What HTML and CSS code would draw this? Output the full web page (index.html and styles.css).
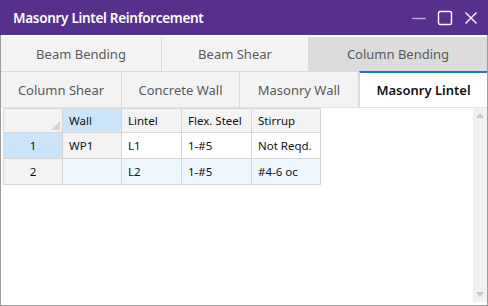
FILE: index.html
```html
<!DOCTYPE html>
<html>
 <head>
  <title>Masonry Lintel Reinforcement</title>
  <link rel="stylesheet" href="styles.css">
 </head>
 <body>
  <div class="window">
   <div class="titlebar">
    <span class="title">Masonry Lintel Reinforcement</span>
    <div class="controls">
     <svg class="ctl min" width="16" height="16" viewBox="0 0 16 16"><path d="M1 8.5h14" stroke="#b9a9d2" stroke-width="1.4" fill="none"/></svg>
     <svg class="ctl max" width="16" height="16" viewBox="0 0 16 16"><rect x="1.5" y="1.5" width="13" height="13" rx="1.5" stroke="#fff" stroke-width="1.4" fill="none"/></svg>
     <svg class="ctl close" width="16" height="16" viewBox="0 0 16 16"><path d="M2.5 2.5l11 11M13.5 2.5l-11 11" stroke="#fff" stroke-width="1.4" fill="none"/></svg>
    </div>
   </div>

   <div class="tabs">
    <div class="tabrow row-top">
     <div class="tab">Beam Bending</div>
     <div class="tab">Beam Shear</div>
     <div class="tab pressed">Column Bending</div>
    </div>
    <div class="tabrow row-bottom">
     <div class="tab">Column Shear</div>
     <div class="tab">Concrete Wall</div>
     <div class="tab">Masonry Wall</div>
     <div class="tab selected">Masonry Lintel</div>
    </div>
   </div>

   <div class="panel">
    <table class="grid">
     <tr class="head">
      <th class="corner"><span class="corner-mark"></span></th>
      <th class="cur">Wall</th>
      <th>Lintel</th>
      <th>Flex. Steel</th>
      <th>Stirrup</th>
     </tr>
     <tr>
      <td class="rowhead cur">1</td>
      <td class="readonly">WP1</td>
      <td>L1</td>
      <td>1-#5</td>
      <td>Not Reqd.</td>
     </tr>
     <tr class="alt">
      <td class="rowhead">2</td>
      <td></td>
      <td>L2</td>
      <td>1-#5</td>
      <td>#4-6 oc</td>
     </tr>
    </table>
    <div class="scrollbar">
     <span class="arrow up"></span>
     <span class="arrow down"></span>
    </div>
   </div>
  </div>
 </body>
</html>
```

FILE: styles.css
```css
body
{
 margin: 0;
 font-family: "Noto Sans", "DejaVu Sans", sans-serif;
}
.window
{
 width: 488px;
 height: 306px;
 box-sizing: border-box;
 border: 1px solid #9c9c9c;
 border-top: none;
 background: #fff;
 display: flex;
 flex-direction: column;
}
.titlebar
{
 height: 35px;
 margin: 0 -1px;
 background: #55308d;
 color: #fff;
 display: flex;
 align-items: center;
 justify-content: space-between;
 padding: 0 9px 0 13px;
}
.title { font-size: 13.5px; font-weight: 600; letter-spacing: -0.3px; }
.controls { display: flex; gap: 10px; align-items: center; }

.tabs { padding-top: 2px; background: #fff; }
.tabrow
{
 display: grid;
 font-size: 13px;
 color: #5a5a5a;
}
.row-top { grid-template-columns: 161px 147px 1fr; height: 34px; border-bottom: 1px solid #dadada; }
.row-bottom { grid-template-columns: 121px 118px 119px 1fr; height: 35px; }
.tab
{
 background: #f3f3f3;
 display: flex;
 align-items: center;
 justify-content: center;
 border-right: 1px solid #dadada;
}
.tab:last-child { border-right: none; }
.tab.pressed { background: #dcdcdc; }
.tab.selected
{
 background: #fff;
 color: #111;
 font-weight: 600;
 border-top: 2px solid #1976d2;
 border-left: 1px solid #dadada;
 margin-top: -1px;
}

.panel
{
 flex: 1;
 border-top: 1px solid #e2e2e2;
 display: flex;
 justify-content: space-between;
 padding: 0 0 3px 2px;
}
.grid
{
 border-collapse: collapse;
 font-size: 11.5px;
 color: #111;
 align-self: flex-start;
}
.grid th, .grid td
{
 border: 1px solid #d6d6d6;
 padding: 0 0 0 6px;
 text-align: left;
 font-weight: normal;
 white-space: nowrap;
}
.grid th { height: 23px; background: #f3f3f3; }
.grid td { height: 25px; background: #fff; }
.grid th.corner { width: 52px; position: relative; }
.grid th:nth-child(2) { width: 52px; }
.grid th:nth-child(3) { width: 53px; }
.grid th:nth-child(4) { width: 63px; }
.grid th:nth-child(5) { width: 62px; }
.corner-mark
{
 position: absolute;
 right: 2px;
 bottom: 2px;
 width: 0;
 height: 0;
 border-left: 9px solid transparent;
 border-bottom: 9px solid #d4d4d4;
}
.grid td.rowhead { background: #f3f3f3; text-align: center; padding: 0; }
.grid .cur, .grid td.rowhead.cur { background: #cce4f7; }
.grid td.readonly { background: #f3f3f3; }
.grid tr.alt td { background: #eef6fd; }
.grid tr.alt td.rowhead { background: #f3f3f3; }

.scrollbar
{
 width: 14px;
 background: #f1f1f1;
 display: flex;
 flex-direction: column;
 justify-content: space-between;
 align-items: center;
 padding: 5px 0 5px;
}
.arrow { width: 0; height: 0; border-left: 4px solid transparent; border-right: 4px solid transparent; }
.arrow.up { border-bottom: 5px solid #c9c9c9; }
.arrow.down { border-top: 5px solid #c9c9c9; }
```
